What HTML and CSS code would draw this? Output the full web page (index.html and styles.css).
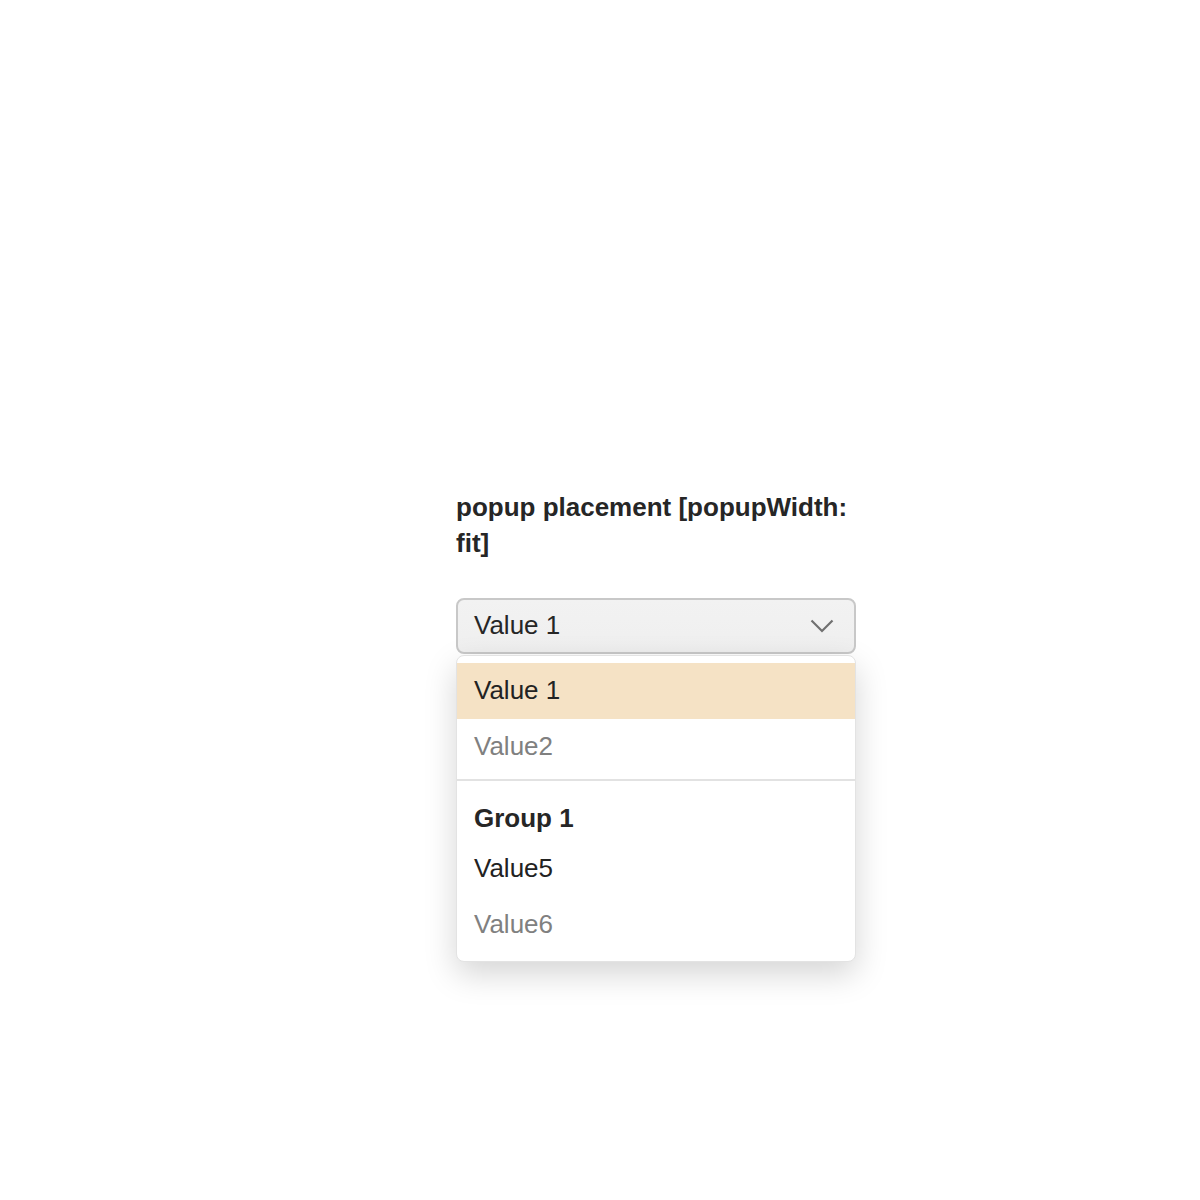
FILE: index.html
```html
<!DOCTYPE html>
<html>
<head>
<meta charset="utf-8">
<link rel="stylesheet" href="styles.css">
</head>
<body>
<div class="page">
  <div class="demo">
    <h2 class="title">popup placement [popupWidth: fit]</h2>
    <div class="select">
      <div class="select-btn">
        <span class="select-value">Value 1</span>
        <svg class="chevron" width="24" height="14" viewBox="0 0 24 14"><path d="M1.5 1.5 L12 12 L22.5 1.5" fill="none" stroke="#707070" stroke-width="2.2"/></svg>
      </div>
      <div class="popup">
        <div class="option selected">Value 1</div>
        <div class="option muted">Value2</div>
        <div class="divider"></div>
        <div class="group">Group 1</div>
        <div class="option">Value5</div>
        <div class="option muted">Value6</div>
      </div>
    </div>
  </div>
</div>
</body>
</html>
```

FILE: styles.css
```css
html, body {
  margin: 0;
  padding: 0;
  background: #ffffff;
}
body {
  min-height: 1200px;
  font-family: "Liberation Sans", Arial, sans-serif;
  color: #222222;
}
.page {
  padding-top: 489px;
  padding-left: 456px;
}
.demo {
  width: 400px;
}
.title {
  margin: 0;
  font-size: 26px;
  line-height: 36px;
  font-weight: bold;
  color: #262626;
}
.select {
  margin-top: 37px;
}
.select-btn {
  box-sizing: border-box;
  height: 56px;
  border: 2px solid #c8c8c8;
  border-radius: 8px;
  background: linear-gradient(#f2f2f2, #efefef);
  display: flex;
  align-items: center;
  justify-content: space-between;
  padding: 0 20px 2px 16px;
}
.select-value {
  font-size: 26px;
  color: #262626;
}
.chevron {
  display: block;
  margin-top: 2px;
}
.popup {
  margin-top: 1px;
  box-sizing: border-box;
  background: #ffffff;
  border: 1px solid #e3e3e3;
  border-radius: 8px;
  padding: 7px 0 8px;
  box-shadow: 0 12px 32px rgba(0, 0, 0, 0.17);
}
.option {
  height: 56px;
  display: flex;
  align-items: center;
  padding: 0 17px 2px;
  box-sizing: border-box;
  font-size: 26px;
  color: #222222;
}
.option.selected {
  background: #f5e2c5;
}
.option.muted {
  color: #808080;
}
.divider {
  height: 2px;
  background: #e2e2e2;
  margin-top: 4px;
}
.group {
  height: 53px;
  display: flex;
  align-items: flex-end;
  padding: 0 17px;
  font-size: 26px;
  font-weight: bold;
  color: #262626;
  margin-bottom: 7px;
}
```
